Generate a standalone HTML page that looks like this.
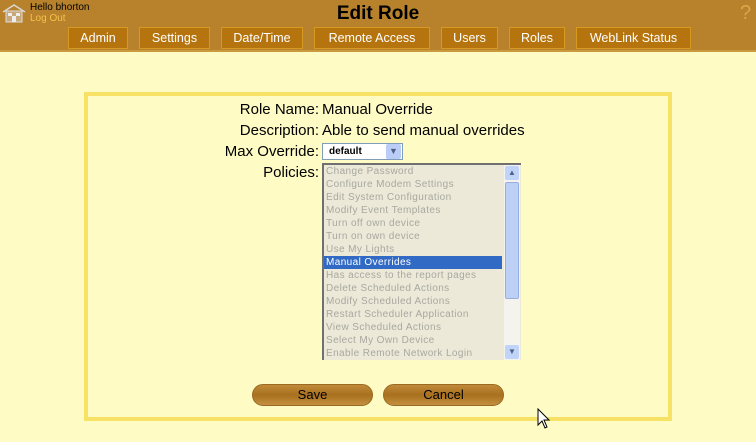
<!DOCTYPE html><html><head><style>
body{margin:0;width:756px;height:442px;background:#fefbc4;font-family:"Liberation Sans",sans-serif;position:relative;overflow:hidden}
.hd{position:absolute;left:0;top:0;width:756px;height:50px;background:#b7822b;border-bottom:2px solid #c99a3e}
.t{position:absolute;top:27px;height:20px;border:1px solid #d69a22;background:#b6740e;color:#fff;font-size:12.5px;line-height:20px;text-align:center}
.a{position:absolute}
.lab{position:absolute;right:437px;font-size:15px;color:#000}
.val{position:absolute;left:322px;font-size:15px;color:#000}
.list{position:absolute;left:322px;top:163px;width:199px;height:197px;background:#ece9d8;border-left:2px solid #707070;border-top:2px solid #707070;box-sizing:border-box;overflow:hidden}
.it{height:13px;font-size:10px;line-height:13px;color:#a8a8a0;padding-left:2px;letter-spacing:.4px;white-space:nowrap}
.btn{position:absolute;top:384px;height:20px;border-radius:11px;background:linear-gradient(#c08a3a,#a8701e 50%,#c49040);border:1px solid #9a6a20;font-size:13px;text-align:center;line-height:20px;color:#000}
</style></head><body>
<div class="hd"></div>
<svg class="a" style="left:2px;top:3px" width="24" height="20"><path d="M1 9 L12 2 L23 9" stroke="#d8d8d8" fill="none" stroke-width="1.5"/><rect x="4" y="8" width="16" height="11" fill="#c8a878" stroke="#ddd"/><rect x="6" y="10" width="4" height="3" fill="#eee"/><rect x="14" y="10" width="4" height="3" fill="#eee"/><rect x="10" y="13" width="4" height="6" fill="#eee"/></svg>
<div class="a" style="left:30px;top:2px;font-size:10px;color:#000">Hello bhorton</div>
<div class="a" style="left:30px;top:13px;font-size:10px;color:#f6c04a">Log Out</div>
<div class="a" style="left:0;width:756px;top:3px;text-align:center;font-size:19px;font-weight:bold;color:#000">Edit Role</div>
<div class="a" style="left:740px;top:2px;font-size:20px;color:#d9a64a">?</div>
<div class="t" style="left:68px;width:58px">Admin</div>
<div class="t" style="left:139px;width:69px">Settings</div>
<div class="t" style="left:221px;width:80px">Date/Time</div>
<div class="t" style="left:314px;width:114px">Remote Access</div>
<div class="t" style="left:441px;width:55px">Users</div>
<div class="t" style="left:509px;width:54px">Roles</div>
<div class="t" style="left:576px;width:113px">WebLink Status</div>
<div class="a" style="left:84px;top:92px;width:580px;height:321px;border:4px solid #f7e266"></div>
<div class="lab" style="top:101px">Role Name:</div><div class="val" style="top:101px">Manual Override</div>
<div class="lab" style="top:122px">Description:</div><div class="val" style="top:122px">Able to send manual overrides</div>
<div class="lab" style="top:143px">Max Override:</div>
<div class="a" style="left:322px;top:143px;height:17px;border:1px solid #7f9db9;background:#fff;font-size:10px;line-height:16px;font-weight:bold;padding-left:6px;box-sizing:border-box;width:81px">default</div>
<div class="a" style="left:386px;top:144px;width:15px;height:15px;background:#b9cdf6;border-radius:2px;font-size:9px;color:#4d6185;text-align:center;line-height:15px">&#9660;</div>
<div class="lab" style="top:164px">Policies:</div>
<div class="list">
<div class="it">Change Password</div><div class="it">Configure Modem Settings</div><div class="it">Edit System Configuration</div><div class="it">Modify Event Templates</div><div class="it">Turn off own device</div><div class="it">Turn on own device</div><div class="it">Use My Lights</div><div class="it" style="background:#316ac5;color:#fff;width:176px">Manual Overrides</div><div class="it">Has access to the report pages</div><div class="it">Delete Scheduled Actions</div><div class="it">Modify Scheduled Actions</div><div class="it">Restart Scheduler Application</div><div class="it">View Scheduled Actions</div><div class="it">Select My Own Device</div><div class="it">Enable Remote Network Login</div>
</div>
<div class="a" style="left:504px;top:165px;width:16px;height:195px;background:#f4f3ee"></div>
<div class="a" style="left:505px;top:166px;width:14px;height:14px;background:#c0d3f8;border-radius:2px;font-size:8px;text-align:center;line-height:14px;color:#4d6185">&#9650;</div>
<div class="a" style="left:505px;top:182px;width:14px;height:117px;background:#bcd0f6;border:1px solid #98b0e0;box-sizing:border-box;border-radius:2px"></div>
<div class="a" style="left:505px;top:345px;width:14px;height:14px;background:#c0d3f8;border-radius:2px;font-size:8px;text-align:center;line-height:14px;color:#4d6185">&#9660;</div>
<div class="btn" style="left:252px;width:119px">Save</div>
<div class="btn" style="left:383px;width:119px">Cancel</div>
<svg class="a" style="left:537px;top:408px" width="14" height="22"><path d="M1 1 L1 17 L5 13 L8 20 L10 19 L7 12 L12 12 Z" fill="#fff" stroke="#000"/></svg>
</body></html>
